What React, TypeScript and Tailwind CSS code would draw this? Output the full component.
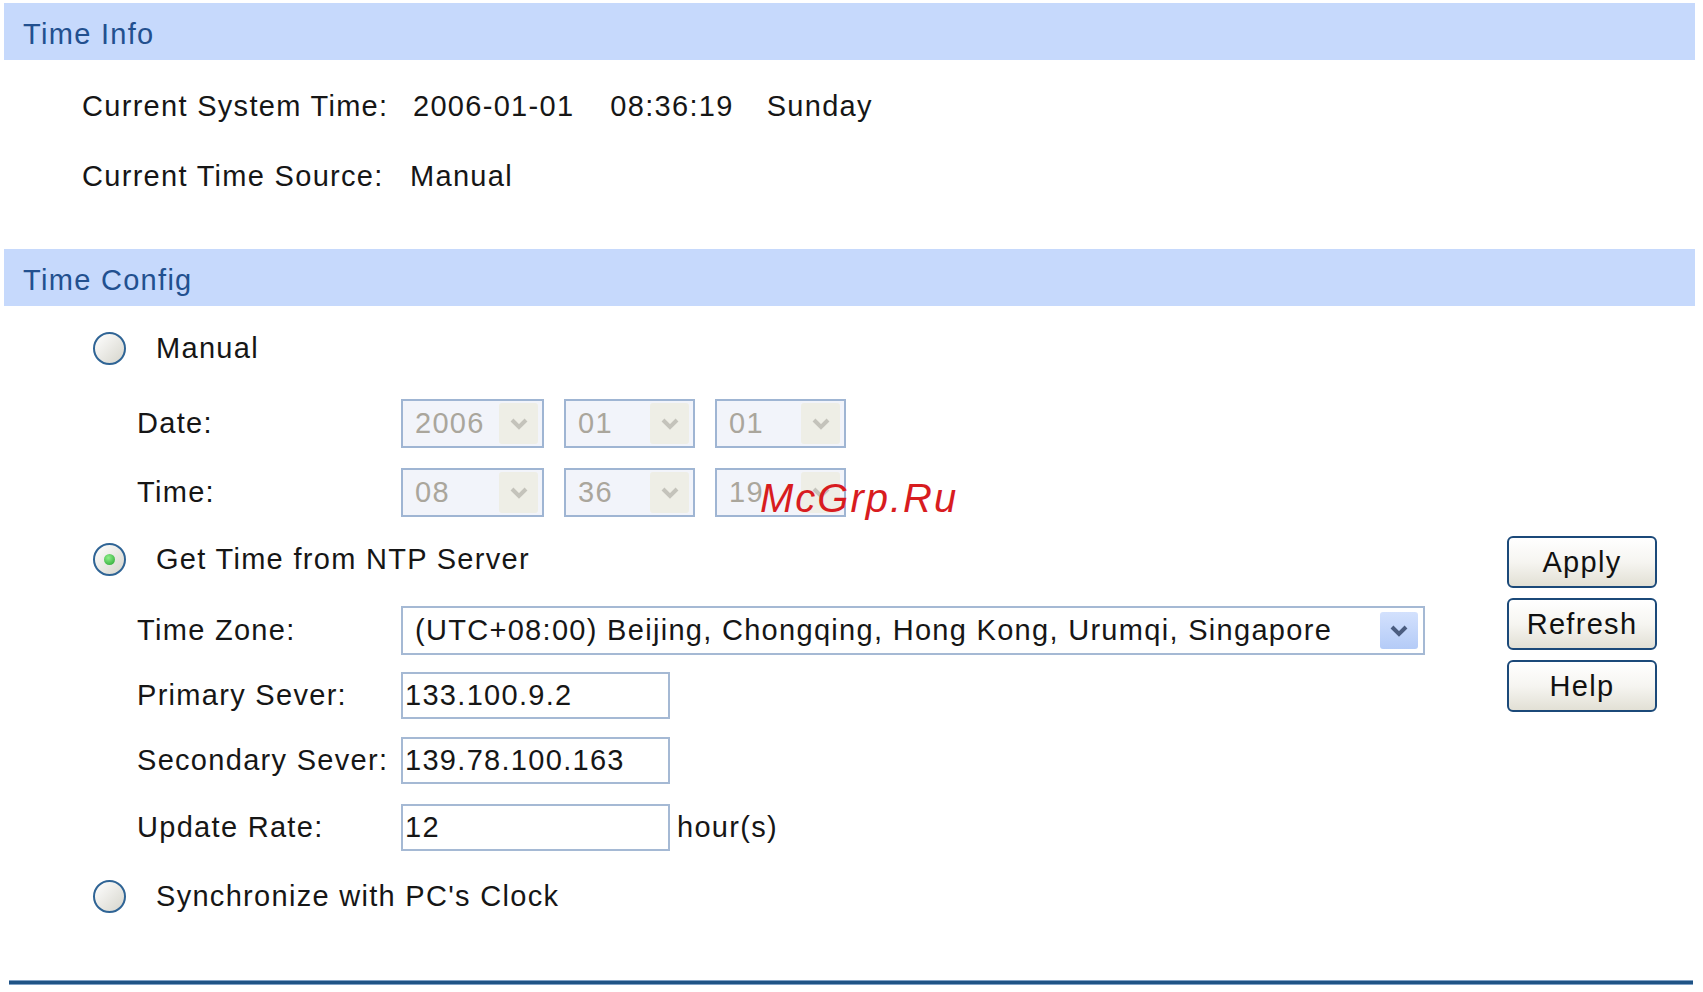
import React from "react";

const Chevron: React.FC<{ color: string }> = ({ color }) => (
  <svg width="18" height="12" viewBox="0 0 18 12">
    <polyline points="2,2 9,9 16,2" fill="none" stroke={color} strokeWidth="4" strokeLinejoin="miter" />
  </svg>
);

const Radio: React.FC<{ checked?: boolean }> = ({ checked }) => (
  <span className="flex h-[33px] w-[33px] items-center justify-center rounded-full border-2 border-[#2f6495] bg-gradient-to-br from-[#ffffff] to-[#d6d5cc]">
    {checked && (
      <span className="h-[11px] w-[11px] rounded-full bg-[radial-gradient(circle_at_40%_35%,#8ff08a,#22a22e)]" />
    )}
  </span>
);

const DisabledSelect: React.FC<{ value: string; width: string }> = ({ value, width }) => (
  <div
    className={`flex h-[49px] ${width} items-center justify-between border-2 border-[#9fb5d3] bg-[#f2f4fa] pl-[12px] pr-[4px]`}
  >
    <span className="text-[#aaa69c]">{value}</span>
    <span className="flex h-[41px] w-[39px] items-center justify-center rounded-[3px] bg-[#eeeee6]">
      <Chevron color="#c4c3bb" />
    </span>
  </div>
);

const TextInput: React.FC<{ value: string }> = ({ value }) => (
  <div className="flex h-[47px] w-[269px] items-center border-2 border-[#a5b9d4] bg-white pl-[2px]">
    {value}
  </div>
);

const FieldRow: React.FC<{ label: string; className?: string; children: React.ReactNode }> = ({
  label,
  className,
  children,
}) => (
  <div className={`flex items-center pl-[44px] ${className ?? ""}`}>
    <span className="w-[264px] shrink-0">{label}</span>
    {children}
  </div>
);

const Header: React.FC<{ title: string; className?: string }> = ({ title, className }) => (
  <div className={`flex h-[57px] items-center bg-[#c6d9fc] pl-[19px] pt-[5px] text-[#22508f] ${className ?? ""}`}>
    {title}
  </div>
);

const ActionButton: React.FC<{ label: string }> = ({ label }) => (
  <button className="flex h-[52px] w-[150px] items-center justify-center rounded-[6px] border-2 border-[#1b4979] bg-gradient-to-b from-[#ffffff] via-[#f6f5f1] to-[#e2e0d5] text-[#111]">
    {label}
  </button>
);

export default function App() {
  return (
    <div className="relative min-h-[992px] w-full bg-white pl-[4px] pr-[8px] pt-[3px] font-['Liberation_Sans',Arial,sans-serif] text-[29px] leading-none tracking-[1.3px] text-[#161616]">
      {/* Time Info */}
      <Header title="Time Info" />
      <div className="mt-[26px] flex h-[40px] items-center pl-[78px]">
        <span className="w-[331px] shrink-0">Current System Time:</span>
        <span>2006-01-01</span>
        <span className="ml-[36px]">08:36:19</span>
        <span className="ml-[33px]">Sunday</span>
      </div>
      <div className="mt-[30px] flex h-[40px] items-center pl-[78px]">
        <span className="w-[328px] shrink-0">Current Time Source:</span>
        <span>Manual</span>
      </div>

      {/* Time Config */}
      <Header title="Time Config" className="mt-[53px]" />
      <div className="flex">
        <div className="flex-1 pl-[89px]">
          <div className="mt-[18px] flex h-[48px] items-center">
            <Radio />
            <span className="ml-[30px]">Manual</span>
          </div>
          <FieldRow label="Date:" className="mt-[27px]">
            <div className="flex gap-[20px]">
              <DisabledSelect value="2006" width="w-[143px]" />
              <DisabledSelect value="01" width="w-[131px]" />
              <DisabledSelect value="01" width="w-[131px]" />
            </div>
          </FieldRow>
          <FieldRow label="Time:" className="mt-[20px]">
            <div className="flex gap-[20px]">
              <DisabledSelect value="08" width="w-[143px]" />
              <DisabledSelect value="36" width="w-[131px]" />
              <DisabledSelect value="19" width="w-[131px]" />
            </div>
          </FieldRow>
          <div className="mt-[18px] flex h-[48px] items-center">
            <Radio checked />
            <span className="ml-[30px]">Get Time from NTP Server</span>
          </div>
          <FieldRow label="Time Zone:" className="mt-[23px]">
            <div className="flex h-[49px] w-[1024px] items-center justify-between border-2 border-[#a5b9d4] bg-white pl-[12px] pr-[5px]">
              <span>(UTC+08:00) Beijing, Chongqing, Hong Kong, Urumqi, Singapore</span>
              <span className="flex h-[37px] w-[38px] items-center justify-center rounded-[3px] bg-gradient-to-b from-[#d3e1fd] to-[#b4cbf7]">
                <Chevron color="#4b5d80" />
              </span>
            </div>
          </FieldRow>
          <FieldRow label="Primary Sever:" className="mt-[17px]">
            <TextInput value="133.100.9.2" />
          </FieldRow>
          <FieldRow label="Secondary Sever:" className="mt-[18px]">
            <TextInput value="139.78.100.163" />
          </FieldRow>
          <FieldRow label="Update Rate:" className="mt-[20px]">
            <TextInput value="12" />
            <span className="ml-[7px]">hour(s)</span>
          </FieldRow>
          <div className="mt-[21px] flex h-[48px] items-center">
            <Radio />
            <span className="ml-[30px]">Synchronize with PC's Clock</span>
          </div>
        </div>
        <div className="mr-[38px] flex w-[150px] flex-col gap-[10px] pt-[230px]">
          <ActionButton label="Apply" />
          <ActionButton label="Refresh" />
          <ActionButton label="Help" />
        </div>
      </div>

      <div className="ml-[5px] mr-[2px] mt-[60px] h-[5px] border-y border-[#7fa0c4] bg-[#1f5385]" />

      {/* watermark */}
      <span className="absolute left-[760px] top-[478px] text-[40px] italic tracking-[2px] text-[#d81c1f]">
        McGrp.Ru
      </span>
    </div>
  );
}
